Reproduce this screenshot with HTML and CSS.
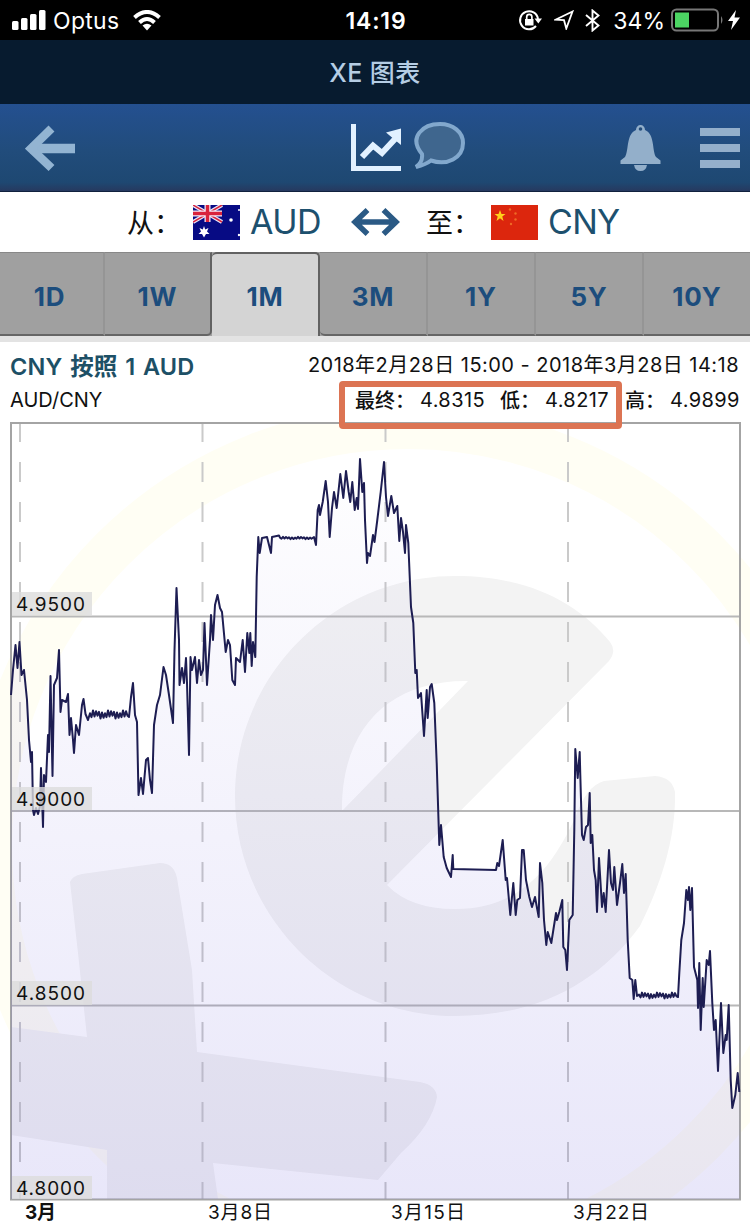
FILE: index.html
```html
<!DOCTYPE html>
<html lang="zh-CN">
<head>
<meta charset="utf-8">
<title>XE 图表</title>
<link rel="stylesheet" href="styles.css">
</head>
<body>
<header class="status">
  <div class="status-left">
    <svg width="34" height="21" viewBox="0 0 34 21" fill="#fff"><rect x="0" y="11" width="6.5" height="9" rx="1.5"/><rect x="9" y="8" width="6.5" height="12" rx="1.5"/><rect x="18" y="4" width="6.5" height="16" rx="1.5"/><rect x="27" y="0" width="6.5" height="20" rx="1.5"/></svg>
    <span class="carrier">Optus</span>
    <svg class="wifi" width="30" height="21" viewBox="0 0 30 21" fill="none" stroke="#fff" stroke-width="4"><path d="M2.5 7.5Q15-3.500 27.500 7.500M7.500 12.500Q15 5.500 22.500 12.500"/><path d="M10.500 15.500Q15 12 19.500 15.500L15 20.500Z" fill="#fff" stroke="none"/></svg>
  </div>
  <time class="clock">14:19</time>
  <div class="status-right">
    <svg width="24" height="22" viewBox="0 0 24 22"><path d="M18 17A9 9 0 1 1 20 10" fill="none" stroke="#fff" stroke-width="2"/><path d="M16.500 9.500H24L20.300 14.500Z" fill="#fff"/><rect x="7" y="10" width="8.500" height="6.500" fill="#fff"/><path d="M8.700 10V8a2.600 2.600 0 0 1 5.200 0V10" fill="none" stroke="#fff" stroke-width="1.700"/></svg>
    <svg class="locate" width="20" height="20" viewBox="0 0 20 20" fill="none" stroke="#fff" stroke-width="1.800"><path d="M18.500 1.500L1.500 9.700L10 10.200L12.300 18.500Z"/></svg>
    <svg class="bluetooth" width="15" height="23" viewBox="0 0 15 23" fill="none" stroke="#fff" stroke-width="1.900"><path d="M1 6L13.500 16.500L7.500 21.500V1.500L13.500 6.500L1 17"/></svg>
    <span class="percent">34%</span>
    <svg width="53" height="24" viewBox="0 0 53 24"><rect x="1" y="1.500" width="46" height="21" rx="4.500" fill="none" stroke="#777" stroke-width="2"/><path d="M50 8Q53 12 50 16Z" fill="#777"/><rect x="4" y="4.500" width="14" height="15" fill="#4cd563"/></svg>
    <svg class="bolt" width="12" height="20" viewBox="0 0 12 20" fill="#fff"><path d="M8 0L0 11H5L3 20L12 7.500H6.500Z"/></svg>
  </div>
</header>
<div class="title">XE 图表</div>
<nav class="toolbar">
  <svg class="back" width="50" height="47" viewBox="0 0 50 47" fill="none" stroke="#93b4d2"><path d="M5 23.500H50" stroke-width="9.500"/><path d="M26.500 3.500L6 23.500L26.500 43" stroke-width="8.500"/></svg>
  <div class="views">
    <svg width="51" height="49" viewBox="0 0 51 49" fill="none" stroke="#e2f1ff"><path d="M2.500 1V45.500H50" stroke-width="5"/><path d="M11 34L22 22.500L31 30L44 16" stroke-width="6"/><path d="M35 9.500L50 5.500V22Z" fill="#e2f1ff" stroke="none"/></svg>
    <svg class="chat" width="51" height="47" viewBox="0 0 51 47"><path d="M8 32C-6 15 9 2 26 2C39 2 49 10 49 21C49 36 33 44 17 38.500Q12 42.500 2 45Q9 40 8 32Z" fill="#3f668e" stroke="#82a8cd" stroke-width="4"/></svg>
  </div>
  <svg class="bell" width="41" height="48" viewBox="0 0 41 48"><path d="M16 6A4.500 5 0 0 1 25 6C35 10 32 27 36 33L40.500 36.500V40H.5V36.500L5 33C9 27 6 10 16 6Z" fill="#93afca"/><path d="M14 41H27Q26 47 20.500 47T14 41Z" fill="#93afca"/><circle cx="20.500" cy="5" r="1.800" fill="#244c7a"/></svg>
  <div class="menu"><i></i><i></i><i></i></div>
</nav>
<section class="pair">
  <span class="from">从：</span>
  <svg class="flag-au" width="47" height="35" viewBox="0 0 47 35"><rect width="47" height="35" fill="#070b84"/><path d="M0 0L29 17M29 0L0 17" stroke="#e8e4f4" stroke-width="4"/><path d="M0 0L29 17M29 0L0 17" stroke="#d9233c" stroke-width="1.500"/><path d="M14.500 0V17M0 8.500H29" stroke="#f6eefa" stroke-width="6"/><path d="M14.500 0V17M0 8.500H29" stroke="#d9233c" stroke-width="3.500"/><path d="M11 21L12.200 24.400L15.500 23L14 26.500L16.500 29L13 29L11 32.500L9 29L5.500 29L8 26.500L6.500 23L9.800 24.400Z" fill="#fff"/><g fill="#fff"><circle cx="38" cy="15" r="1.800"/><circle cx="46" cy="5" r="1"/><circle cx="46" cy="30" r="1.200"/></g></svg>
  <span class="code aud">AUD</span>
  <svg class="swap" width="49" height="28" viewBox="0 0 49 28" fill="none" stroke="#2b5a85" stroke-width="5.500"><path d="M4 14H45M16.500 2L4 14L16.500 26M32.500 2L45 14L32.500 26"/></svg>
  <span class="to">至：</span>
  <svg class="flag-cn" width="47" height="35" viewBox="0 0 47 35"><rect width="47" height="35" fill="#dc260d"/><path d="M9 5L10.500 9H14.500L11.300 11.500L12.500 16L9 13.300L5.500 16L6.700 11.500L3.500 9H7.500Z" fill="#ffd01b"/><g fill="#ee6a25"><circle cx="19" cy="4.500" r="1.200"/><circle cx="24.500" cy="8.500" r="1.200"/><circle cx="24.500" cy="14.500" r="1.200"/><circle cx="20" cy="19" r="1.200"/></g></svg>
  <span class="code cny">CNY</span>
</section>
<div class="tabs">
  <button class="tab">1D</button><button class="tab before">1W</button><button class="tab active">1M</button><button class="tab after">3M</button><button class="tab">1Y</button><button class="tab">5Y</button><button class="tab">10Y</button>
</div>
<section class="summary">
  <div class="row first"><h1 class="heading">CNY 按照 1 AUD</h1><span class="range">2018年2月28日 15:00 - 2018年3月28日 14:18</span></div>
  <div class="row second"><span class="symbol">AUD/CNY</span>
    <div class="stats"><div class="marked"><b>最终：</b><span class="value last">4.8315</span><b>低：</b><span class="value">4.8217</span></div><b>高：</b><span class="value">4.9899</span></div>
  </div>
</section>
<svg class="chart" width="750" height="803" viewBox="0 420 750 803">
  <defs>
    <linearGradient id="fill" gradientUnits="userSpaceOnUse" x1="0" y1="423" x2="0" y2="1199"><stop offset="0" stop-color="#4434d0" stop-opacity="0"/><stop offset="1" stop-color="#4434d0" stop-opacity=".12"/></linearGradient>
  </defs>
  <clipPath id="frame"><rect x="0" y="424" width="750" height="775"/></clipPath>
  <g clip-path="url(#frame)">
    <circle cx="408" cy="845" r="418" fill="none" stroke="#fffef4" stroke-width="44"/>
    <path fill="#f3f3f3" d="M455 576C530 576 579 604 610 642Q617 651 609 661L387 885Q410 909 455 909C520 909 552 868 575 818Q586 786 604 781L655 776Q672 777 675 792C676 835 663 880 640 926C597 985 535 1016 455 1016C334 1016 235 917 235 796S334 576 455 576ZM342 811L468 681C388 680 341 730 342 811Z"/>
    <path fill="#f3f3f3" d="M70 882Q72 876 82 874L160 863Q174 863 177 878L192 970L197 1052L420 1082Q436 1085 437 1097Q432 1125 401 1153L378 1180L213 1163L218 1199H107V1150L11 1135V1027L87 1037L78 953Z"/>
  </g>
  <g stroke="#b8b8b8" stroke-width="2"><path d="M11 616.500H740M11 811H740M11 1005.500H740"/></g>
  <path d="M20 422V1199M202.500 422V1199M385.500 422V1199M568 422V1199" stroke="#cacaca" stroke-width="2" stroke-dasharray="20 20"/>
  <path d="M11 1199.500V423H740V1199.500Z" fill="none" stroke="#a4a4a4" stroke-width="2"/>
  <path id="area" fill="url(#fill)"/>
  <path id="line" fill="none" stroke="#1d1d52" stroke-width="2" stroke-linejoin="round"/>
  <g fill="#dcdcdc" fill-opacity=".8"><rect x="12" y="592" width="80" height="23"/><rect x="12" y="787" width="80" height="23"/><rect x="12" y="981" width="80" height="24"/><rect x="12" y="1176" width="80" height="23"/></g>
  <g class="label"><text x="16" y="611" textLength="69">4.9500</text><text x="16" y="806" textLength="69">4.9000</text><text x="16" y="1000" textLength="69">4.8500</text><text x="16" y="1195" textLength="69">4.8000</text></g>
  <g class="label dates"><text class="month" x="25" y="1219" textLength="31">3月</text><text x="208" y="1219" textLength="64">3月8日</text><text x="391" y="1219" textLength="74">3月15日</text><text x="573" y="1219" textLength="76">3月22日</text></g>
</svg>
<script src="chart.js"></script>
</body>
</html>
```
FILE: styles.css
```css
* { box-sizing: border-box; }
body { margin: 0; width: 750px; height: 1223px; overflow: hidden; background: #fff; color: #111; font-family: Inter, "Noto Sans CJK SC", sans-serif; }
svg { display: block; flex: none; }
span, b, h1, time { white-space: nowrap; }
.status { height: 40px; background: #000; color: #fff; display: grid; grid-template-columns: 1fr auto 1fr; align-items: center; padding: 0 10px 0 12px; font-size: 23px; }
.status-left, .status-right { display: flex; align-items: center; }
.status-right { justify-content: flex-end; }
.carrier { margin-left: 7px; letter-spacing: .3px; padding-top: 2px; }
.wifi { margin-left: 13px; }
.clock { font-weight: 600; letter-spacing: .8px; padding-top: 2px; }
.locate { margin-left: 12px; }
.bluetooth { margin-left: 11px; }
.percent { margin: 0 6px 0 13px; padding-top: 2px; }
.bolt { margin-left: 4px; }
.title { height: 64px; padding-bottom: 2px; background: #071b2f; color: #b5cde4; font-size: 25px; font-weight: 500; letter-spacing: .4px; display: flex; align-items: center; justify-content: center; }
.toolbar { height: 88px; background: linear-gradient(#245090, #214c7b 55%, #1e4872 90%, #26395f); border-bottom: 1px solid #10213e; display: flex; align-items: center; padding: 0 10px 0 25px; }
.back { margin-top: 2px; }
.views { display: flex; align-items: center; margin-left: 276px; }
.chat { margin: -5px 0 0 12px; }
.bell { margin: 0 39px 0 auto; }
.menu { width: 40px; display: grid; gap: 8px; }
.menu i { height: 8px; background: #94afcb; }
.pair { height: 60px; display: flex; align-items: center; padding: 0 0 0 127px; font-size: 27px; }
.from, .to { width: 66px; margin-top: -2px; }
.to { width: 65px; }
.code { font-size: 34px; color: #1d506e; margin-left: 10px; margin-top: -1px; }
.aud { width: 101px; letter-spacing: -.5px; }
.cny { letter-spacing: -.7px; }
.swap { margin-right: 26px; }
.tabs { height: 90px; display: grid; grid-template-columns: 105px 107px repeat(4, 108px) 1fr; background: #a0a0a0; border-bottom: 6px solid #e3e3e3; }
.tab { border: 0; border-top: 1px solid #888; border-bottom: 2px solid #666; border-right: 2px solid #959595; background: #a0a0a0; color: #1c4d7d; font: 650 26px Inter, sans-serif; letter-spacing: .8px; padding: 6px 0 0; }
.tab:first-child { padding-right: 4px; }
.tab:last-child { border-right: 0; }
.before { border-right: 2px solid #626262; border-radius: 0 0 5px 0; }
.active { background: #d4d4d4; border: 2px solid #626262; border-left: 0; border-bottom: 0; border-radius: 5px 5px 0 0; padding-top: 3px; }
.after { border-radius: 0 0 0 5px; }
.summary { height: 78px; padding: 0 11px 0 10px; font-size: 20px; }
.row { display: flex; justify-content: space-between; align-items: center; }
.first { height: 44px; }
.second { height: 28px; }
.heading { margin: 2px 0 0; font-size: 23.5px; font-weight: 600; color: #1d5066; letter-spacing: .2px; word-spacing: 1.5px; }
.range { letter-spacing: .47px; margin-top: -2px; }
.stats { display: flex; align-items: center; }
.stats b { font-weight: 500; margin-top: -2px; }
.marked { position: relative; display: flex; align-items: center; margin-right: 11px; }
.marked::after { content: ""; box-sizing: border-box; position: absolute; left: -16px; top: -6px; width: 283px; height: 48px; border: 6px solid #dc7453; border-radius: 4px; z-index: 1; }
.value { width: 69px; letter-spacing: .4px; margin-left: 5px; }
.last { margin-right: 11px; }
.label { font-size: 19px; fill: #111; }
.dates { font-size: 19px; }
.month { font-weight: 700; }
```
FILE: chart.js
```
const flat = (from, to, level, amp) => {
  const out = [];
  for (let x = from, i = 0; x < to; x += 1.5, i++) out.push([x, level + (i % 2 ? 1 : -1) * amp * (0.35 + ((i * 7) % 5) / 5)]);
  return out;
};
const read = s => s.trim().split(/\s+/).map(p => p.split(",").map(Number));
const points = [
  ...read(`11,695 13,670 15.5,645 17.5,668 19.5,642 21.5,675 24,670 27,700 29,740 31,762 32,752 33,810 34,815 36,808 38,814 40,806 41,768 43,827 44,775 46,782 48,735 49,752 50.5,676 52.5,776 54,685 57,678 59,650 60.5,712 62,700 66,702 68,694 69.5,735 71,718 73,740 74,753 76,725 79,735 82,705 83.5,699 85.5,714 88,720`),
  ...flat(90, 128, 714.5, 3.5),
  ...read(`129,717 131,697 133,683 135,715 137,722 138.5,795 141,778 143,794 146,760 148,758 150,780 152,793 154,725 157,705 160,695 163.5,667 166,675 169,695 173,723 174.500,650 176.500,588 179,640 179.500,685 182,668 184,683 186,658 187,683 189,755 190.5,657 192,670 195,657 197,683 199,660 201,675 203,670 204.500,623 207,685 210,640 211,615 213,640 215,605 217.5,595 220,608 222,612 225.7,652 228,640 230,645 232.3,680 235,685 236,658 240,662 242.7,640 245,672 247.3,633 249.3,653 250.3,633 251.7,666 253,642 255.3,657 256.7,577 258.3,537 259.7,553 262,538 267,537 271,553 272,537 279,535.500`),
  ...flat(280, 313, 538, 1),
  ...read(`314,537 316,545 317.7,510 319,505 320,515 322.7,502 325.7,481 328,502 329.7,537 332,508 334,492 336.7,508 340.3,474 343.3,498 346,471 348.7,492 350.3,502 352.3,482 354.7,510 356.7,498 358,509 360,459 362.3,492 364,483 365,520 367,563 368,553 370,556 373,535 374.500,542 377.3,520 380.7,492 384,462 386,497 388,516 391.3,496 394,513 397.3,506 399.3,541 401,518 403,532 405,553 406,525 408.3,543 411,607 413.3,623 415.3,673 416.7,670 418,698 421,693 424,736 426.7,690 427.7,718 430,687 431.7,684 434.3,703 436.7,763 439.3,845 441,825 443.7,857 446.7,868 451,877 452.7,855 453.3,869 496,870 497.3,863 499,866 502.7,840 505.7,880 507,878 510.3,915 513.3,883 515.7,915 517.3,900 520,898 522,850 523.7,850 526,880 529.3,897 532,907 535,897 538.7,917 540,863 542.3,883 544,920 546.3,945 547.7,932 551.3,943 556,913 557,920 559.3,912 562.3,900 563.3,947 565.3,950 567,970 569.3,920 572.7,915 574.3,830 575.3,749 577.7,778 579.7,752 580.3,775 582,835 583.7,840 586,827 588,825 589.7,793 590.7,843 592.3,835 594,870 595.7,880 597,912 599,858 602,907 603.7,893 605.7,912 609,850 611,883 613,890 614.3,867 617,905 620,883 622.3,864 624,893 625.7,874 627.7,940 629.7,978 632.3,980 633.7,999 635.3,980 637,996`),
  ...flat(639, 677, 995.500, 2.500),
  ...read(`678,997 679.3,973 681.3,940 684,923 686.3,890 688,900 689,887 690.3,910 692,888 694,967 697.3,980 698,1008 699.3,963 700.7,1030 702.7,978 703.7,1007 706.7,960 708.7,965 710,951 712.3,1003 714,1030 715.7,1020 718,1071 721,1003 723.3,1053 725.7,1035 726.700,1040 728.7,1005 730.7,1080 732.3,1108 735.3,1095 737.7,1073 739.3,1092`)
];
const d = "M" + points.map(p => p.join(" ")).join("L");
document.getElementById("line").setAttribute("d", d);
document.getElementById("area").setAttribute("d", d + "V1199H11Z");
```
